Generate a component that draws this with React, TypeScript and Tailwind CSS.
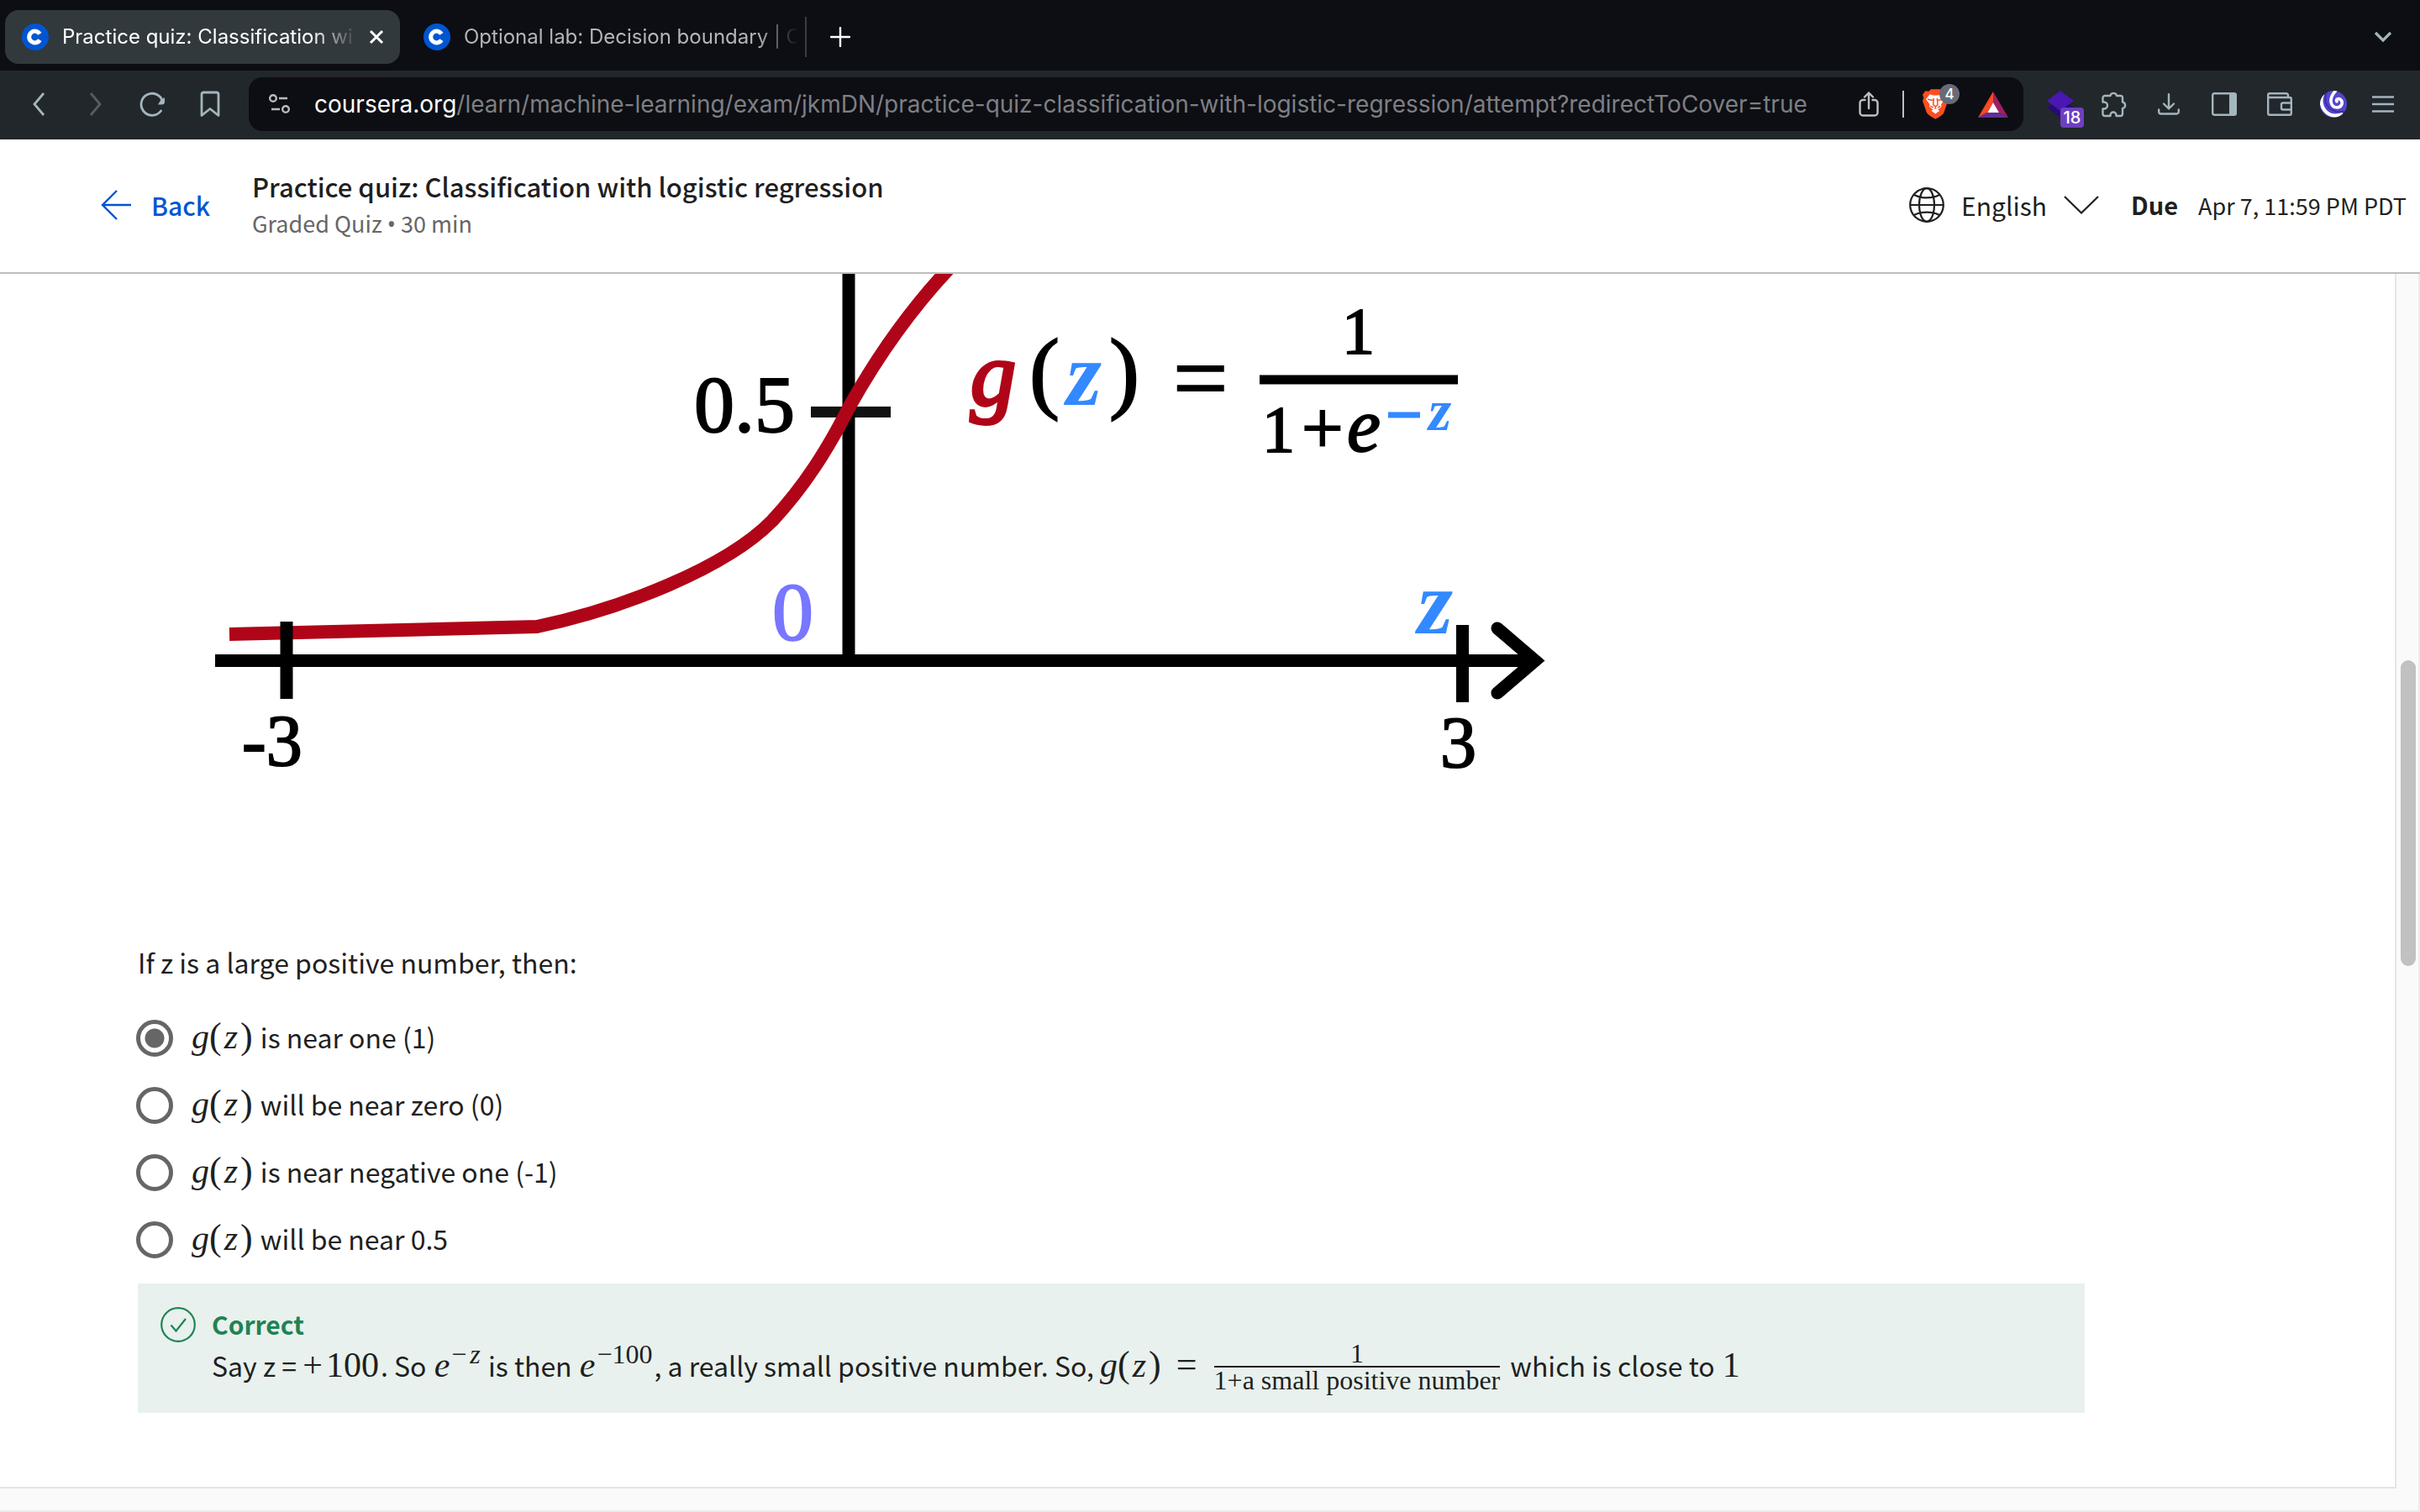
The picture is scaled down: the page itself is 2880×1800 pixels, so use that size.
import React from "react";

const ICON = "#a3b5bd";

function CourseraFavicon() {
  return (
    <svg viewBox="0 0 32 32" className="h-8 w-8 shrink-0" aria-hidden="true">
      <circle cx="16" cy="16" r="16" fill="#0056d2" />
      <path d="M21.4 12.3A6.9 6.9 0 1 0 21.4 19.7" fill="none" stroke="#fff" strokeWidth="5" />
    </svg>
  );
}

function TabStrip() {
  return (
    <div className="flex h-[84px] items-center bg-[#0d0e13] pt-1 pl-1.5 font-['Inter',sans-serif] text-[24px] leading-8">
      <div className="flex h-16 w-[470px] items-center rounded-2xl bg-[#32393d] pr-1.5 pl-5 text-white">
        <CourseraFavicon />
        <span className="ml-4 min-w-0 flex-1 whitespace-nowrap [mask-image:linear-gradient(to_right,#000_84%,transparent_100%)]">
          Practice quiz: Classification wi
        </span>
        <button aria-label="Close tab" className="flex h-10 w-[44px] items-center justify-center">
          <svg viewBox="0 0 18 18" className="h-[18px] w-[18px]" aria-hidden="true">
            <path d="M2 2l14 14M16 2L2 16" stroke="#fff" strokeWidth="3" />
          </svg>
        </button>
      </div>
      <div className="flex h-16 w-[482px] items-center pr-2 pl-7 text-[#b4b5b8]">
        <CourseraFavicon />
        <span className="ml-4 min-w-0 flex-1 whitespace-nowrap [mask-image:linear-gradient(to_right,#000_88%,transparent_100%)]">
          Optional lab: Decision boundary | C
        </span>
      </div>
      <div className="h-12 w-0.5 bg-[#3a3c40]" />
      <button aria-label="New tab" className="flex h-16 w-20 items-center justify-center">
        <svg viewBox="0 0 24 24" className="h-6 w-6" aria-hidden="true">
          <path d="M12 1v22M1 12h22" stroke="#fff" strokeWidth="2.4" strokeLinecap="round" />
        </svg>
      </button>
      <button aria-label="Search tabs" className="mr-3 ml-auto flex h-16 w-16 items-center justify-center">
        <svg viewBox="0 0 22 14" className="h-[14px] w-[22px]" aria-hidden="true">
          <path d="M2 2l9 9 9-9" fill="none" stroke={ICON} strokeWidth="3.2" />
        </svg>
      </button>
    </div>
  );
}

function BraveShield() {
  return (
    <span className="relative h-9 w-[30px]">
      <svg viewBox="0 0 90 107" className="h-9 w-[30px]" aria-hidden="true">
        <path
          d="M22 8L30 0H62L70 8 80 6 90 20 87 30 90 42 76 84Q74 90 62 98L46 107 30 98Q18 90 15 84L0 42 4 30 0 20 10 6Z"
          fill="#fb4f20"
        />
        <path d="M26 18L38 22H54L66 18 80 36 66 54 68 62 54 74 46 68 38 74 24 62 26 54 12 36Z" fill="#fff" />
        <path d="M31 77L46 69 61 77 46 88Z" fill="#fff" />
        <path
          d="M18 36L38 40M74 36L54 40M40 32L38 56 46 62 54 56 52 32M46 62V70M28 60L38 66M64 60L54 66"
          fill="none"
          stroke="#fb4f20"
          strokeWidth="4.5"
        />
      </svg>
      <span className="absolute -top-1.5 left-5 flex h-6 w-6 items-center justify-center rounded-full bg-[#686a78] text-[17px] leading-5 font-medium text-white">
        4
      </span>
    </span>
  );
}

function Toolbar() {
  return (
    <div className="flex h-[82px] items-center bg-[#22272b] pr-4 pb-0.5 pl-3 font-['Inter',sans-serif]">
      <button aria-label="Go back" className="flex h-16 w-[68px] items-center justify-center">
        <svg viewBox="0 0 16 30" className="h-[30px] w-4" aria-hidden="true">
          <path d="M14 2L3 15l11 13" fill="none" stroke={ICON} strokeWidth="2.8" />
        </svg>
      </button>
      <button aria-label="Go forward" className="flex h-16 w-[68px] items-center justify-center">
        <svg viewBox="0 0 16 30" className="h-[30px] w-4" aria-hidden="true">
          <path d="M2 2l11 13L2 28" fill="none" stroke="#565d62" strokeWidth="2.8" />
        </svg>
      </button>
      <button aria-label="Reload" className="flex h-16 w-[68px] items-center justify-center">
        <svg viewBox="0 0 32 32" className="h-8 w-8" aria-hidden="true">
          <path d="M27.6 13A13 13 0 1 0 25.5 24" fill="none" stroke={ICON} strokeWidth="2.8" strokeLinecap="round" />
          <path d="M30 8v5a3.5 3.5 0 0 1-3.5 3.5H22l3-5z" fill={ICON} />
        </svg>
      </button>
      <button aria-label="Bookmark" className="flex h-16 w-[68px] items-center justify-center">
        <svg viewBox="0 0 24 32" className="h-8 w-6" aria-hidden="true">
          <path
            d="M2 4.5A2.5 2.5 0 0 1 4.5 2h15A2.5 2.5 0 0 1 22 4.5V29.5l-10-8-10 8z"
            fill="none"
            stroke={ICON}
            strokeWidth="2.8"
            strokeLinejoin="round"
          />
        </svg>
      </button>
      <div className="ml-3 flex h-16 min-w-0 flex-1 items-center rounded-2xl bg-[#0d0e13] pr-[18px] pl-6">
        <svg viewBox="0 0 26 26" className="h-[26px] w-[26px] shrink-0" fill="none" stroke="#b9bbbf" strokeWidth="2.4" aria-hidden="true">
          <circle cx="5" cy="6" r="3.8" />
          <path d="M12 6h10M3 19h10" />
          <circle cx="20" cy="19" r="3.8" />
        </svg>
        <button className="ml-7 min-w-0 flex-1 overflow-hidden text-left text-[28px] leading-9 whitespace-nowrap text-[#7e7f83]">
          <span className="text-white">coursera.org</span>
          /learn/machine-learning/exam/jkmDN/practice-quiz-classification-with-logistic-regression/attempt?redirectToCover=true
        </button>
        <button aria-label="Share" className="mr-7">
          <svg viewBox="0 0 24 30" className="h-[30px] w-6" fill="none" stroke="#bfc0c2" strokeWidth="2.4" strokeLinecap="round" strokeLinejoin="round" aria-hidden="true">
            <path d="M7.5 10H5a3.5 3.5 0 0 0-3.5 3.5v11.5a3.5 3.5 0 0 0 3.5 3.5h14a3.5 3.5 0 0 0 3.5-3.5V13.5A3.5 3.5 0 0 0 19 10h-2.5" />
            <path d="M12 20V1.5M7 6.5l5-5 5 5" />
          </svg>
        </button>
        <div className="h-8 w-0.5 bg-[#bfc0c2]" />
        <button aria-label="Brave Shields, 4 blocked" className="ml-[22px] flex">
          <BraveShield />
        </button>
        <button aria-label="Brave Rewards" className="ml-9">
          <svg viewBox="0 0 108 93" className="h-[31px] w-9" aria-hidden="true">
            <path d="M54 0L0 93 34 74 54 39Z" fill="#ff4724" />
            <path d="M54 0L108 93 74 74 54 39Z" fill="#9e1f63" />
            <path d="M0 93H108L74 74H34Z" fill="#662d91" />
            <path d="M54 39L34 75H75Z" fill="#fff" />
          </svg>
        </button>
      </div>
      <button aria-label="Extension, 18" className="relative ml-3 flex h-16 w-16 items-center justify-center">
        <svg viewBox="0 0 32 32" className="h-8 w-8" aria-hidden="true">
          <path d="M0 20l16-11 16 11-16 12z" fill="#260b78" />
          <path d="M16 0l16 12-16 12L0 12z" fill="#4a17b0" />
        </svg>
        <span className="absolute top-9 left-8 flex h-6 w-7 items-center justify-center rounded bg-[#6d3fc0] text-[20px] leading-6 font-medium text-white">
          18
        </span>
      </button>
      <button aria-label="Extensions" className="flex h-16 w-16 items-center justify-center">
        <svg viewBox="0 0 30 32" className="h-8 w-[30px]" aria-hidden="true">
          <path
            d="M1.5 8.5a2.5 2.5 0 0 1 2.5-2.5h6.5V5.5a4 4 0 0 1 7.5 0V6h4.5A2.5 2.5 0 0 1 25 8.5V13.5h.5a4 4 0 0 1 0 7.5H25v6.5a2.5 2.5 0 0 1-2.5 2.5H17.5v-1a3.5 3.5 0 0 0-7 0v1H4a2.5 2.5 0 0 1-2.5-2.5V21.5H3a4 4 0 0 0 0-8H1.5z"
            fill="none"
            stroke={ICON}
            strokeWidth="2.4"
            strokeLinejoin="round"
          />
        </svg>
      </button>
      <button aria-label="Downloads" className="flex h-16 w-[66px] items-center justify-center">
        <svg viewBox="0 0 26 26" className="h-[26px] w-[26px]" fill="none" stroke={ICON} strokeWidth="2.4" strokeLinecap="round" strokeLinejoin="round" aria-hidden="true">
          <path d="M13 1.2V18M7 12.5l6 6 6-6M1.2 19.5V22a2.5 2.5 0 0 0 2.5 2.5h18.6a2.5 2.5 0 0 0 2.5-2.5v-2.5" />
        </svg>
      </button>
      <button aria-label="Sidebar" className="flex h-16 w-[66px] items-center justify-center">
        <svg viewBox="0 0 30 28" className="h-7 w-[30px]" aria-hidden="true">
          <rect x="1.2" y="1.2" width="27.6" height="25.6" rx="2" fill="none" stroke={ICON} strokeWidth="2.4" />
          <path d="M21 1h7a1.5 1.5 0 0 1 1.5 1.5v23A1.5 1.5 0 0 1 28 27h-7z" fill={ICON} />
        </svg>
      </button>
      <button aria-label="Wallet" className="flex h-16 w-[66px] items-center justify-center">
        <svg viewBox="0 0 30 28" className="h-7 w-[30px]" fill="none" stroke={ICON} strokeWidth="2.4" strokeLinejoin="round" aria-hidden="true">
          <path d="M1.2 6.5V3A1.8 1.8 0 0 1 3 1.2h19.5A2.5 2.5 0 0 1 25 3.7v2.8" />
          <path d="M1.2 6h25.6A2 2 0 0 1 28.8 8v17a1.8 1.8 0 0 1-1.8 1.8H3A1.8 1.8 0 0 1 1.2 25z" />
          <path d="M28.8 12.5H19a2 2 0 0 0-2 2v4a2 2 0 0 0 2 2h9.8" />
        </svg>
      </button>
      <button aria-label="Profile" className="flex h-16 w-[62px] items-center justify-center">
        <svg viewBox="0 0 96 96" className="h-8 w-8" aria-hidden="true">
          <defs>
            <clipPath id="avatar-disc">
              <circle cx="48" cy="48" r="48" />
            </clipPath>
          </defs>
          <g clipPath="url(#avatar-disc)">
            <rect width="96" height="96" fill="#5446cc" />
            <path d="M60 38C56 32 64 26 71 30 84 38 80 58 62 60 38 60 28 30 56 0" fill="none" stroke="#fff" strokeWidth="11" strokeLinecap="round" />
            <path d="M26 2C10 26 16 84 92 74" fill="none" stroke="#3f2fa8" strokeWidth="6" />
            <path d="M10 12C-8 50 20 104 82 84" fill="none" stroke="#fff" strokeWidth="12" />
          </g>
        </svg>
      </button>
      <button aria-label="Menu" className="flex h-16 w-14 items-center justify-center">
        <svg viewBox="0 0 26 20" className="h-5 w-[26px]" aria-hidden="true">
          <path d="M0 1.5h26M0 10h26M0 18.5h26" stroke={ICON} strokeWidth="2.4" />
        </svg>
      </button>
    </div>
  );
}

function QuizHeader() {
  return (
    <header className="flex h-40 items-center border-b-2 border-[#bdbdbd] bg-white pr-4 pb-0.5 pl-[120px] text-[#1f1f1f]">
      <a href="#back" className="flex w-[180px] items-center text-[30px] leading-10 font-medium text-[#0056d2]">
        <svg viewBox="0 0 36 36" className="mr-6 h-9 w-9" fill="none" stroke="#0056d2" strokeWidth="2.4" aria-hidden="true">
          <path d="M36 18H2M19 1L2 18l17 17" />
        </svg>
        Back
      </a>
      <div>
        <h1 className="text-[31px] leading-[44px] font-medium">Practice quiz: Classification with logistic regression</h1>
        <p className="text-[27px] leading-[44px] text-[#666]">
          Graded Quiz <span className="font-['Noto_Sans',sans-serif]">•</span> 30 min
        </p>
      </div>
      <div className="ml-auto flex items-center">
        <svg viewBox="0 0 42 42" className="mr-5 h-[42px] w-[42px]" fill="none" stroke="#1f1f1f" strokeWidth="2.2" aria-hidden="true">
          <circle cx="21" cy="21" r="19.8" />
          <ellipse cx="21" cy="21" rx="9" ry="19.8" />
          <path d="M1 21h40M6 9c8 4.5 22 4.5 30 0M6 33c8-4.5 22-4.5 30 0" />
        </svg>
        <div className="flex items-center">
          <label htmlFor="language" className="sr-only">
            Language
          </label>
          <select id="language" className="h-14 appearance-none bg-transparent pr-1 text-[30px] leading-[48px]">
            <option>English</option>
          </select>
          <svg viewBox="0 0 42 24" className="ml-4 h-6 w-[42px]" fill="none" stroke="#1f1f1f" strokeWidth="2.2" aria-hidden="true">
            <path d="M1 2l20 19.5L41 2" />
          </svg>
        </div>
        <p className="ml-[38px] text-[27px] leading-10">
          <strong className="mr-6 text-[29px] font-bold">Due</strong>
          Apr 7, 11:59 PM PDT
        </p>
      </div>
    </header>
  );
}

function SigmoidChart() {
  return (
    <svg
      viewBox="240 326 1620 624"
      className="ml-[76px] h-[624px] w-[1620px] shrink-0 font-['Liberation_Serif',serif]"
      role="img"
      aria-label="Sigmoid function g(z) plotted from z = -3 to z = 3"
    >
      <path d="M965 490.5H1060" stroke="#111" strokeWidth="13" />
      <path d="M1010 300V786" stroke="#000" strokeWidth="15" />
      <path
        d="M273 755L639 746C740 725 864 676 919 620 958 578 985 535 1012 482 1044 425 1084 368 1130 319"
        fill="none"
        stroke="#b00518"
        strokeWidth="16"
      />
      <path d="M256 786.5H1826" stroke="#000" strokeWidth="15" />
      <path d="M1782 748L1827 786.5 1782 825" fill="none" stroke="#000" strokeWidth="15" strokeLinecap="round" strokeMiterlimit="8" />
      <path d="M341 740V832M1740.5 744V836" stroke="#000" strokeWidth="15" />
      <g fill="#000" stroke="#000" strokeWidth="2">
        <text x="826" y="514" fontSize="96">0.5</text>
        <text x="288" y="911" fontSize="86">-3</text>
        <text x="1714" y="913" fontSize="86">3</text>
        <text x="1225" y="478" fontSize="108">(</text>
        <text x="1320" y="478" fontSize="108">)</text>
        <text x="1396" y="489" fontSize="116">=</text>
        <text x="1597" y="420" fontSize="78">1</text>
        <text x="1502" y="537" fontSize="78">1</text>
        <text x="1549" y="539" fontSize="88">+</text>
        <text x="1603" y="537" fontSize="90" fontStyle="italic">e</text>
      </g>
      <text x="919" y="761" fontSize="98" fill="#7777ff" stroke="#7777ff" strokeWidth="2">0</text>
      <text x="1155" y="482" fontSize="108" fontStyle="italic" fill="#b00518" stroke="#b00518" strokeWidth="4">g</text>
      <g fill="#3389ff" fontStyle="italic" fontWeight="bold">
        <text x="1269" y="482" fontSize="108">z</text>
        <text x="1687" y="754" fontSize="108">z</text>
        <text x="1700" y="512" fontSize="70">z</text>
      </g>
      <path d="M1499 452H1735" stroke="#000" strokeWidth="11" />
      <path d="M1652 494H1690" stroke="#3389ff" strokeWidth="7" />
    </svg>
  );
}

function MathRun({ children, className = "" }: { children: React.ReactNode; className?: string }) {
  return <span className={`mr-0.5 font-['Liberation_Serif',serif] text-[42px] leading-10 ${className}`}>{children}</span>;
}

function GofZ() {
  return (
    <MathRun>
      <i>g</i>
      <span className="text-[44px]">(</span>
      <i className="px-[3px]">z</i>
      <span className="text-[44px]">)</span>
    </MathRun>
  );
}

const OPTIONS = ["is near one (1)", "will be near zero (0)", "is near negative one (-1)", "will be near 0.5"];

function Question() {
  return (
    <fieldset className="mt-[175px] text-[32px] leading-10">
      <legend className="mb-[31px]">If z is a large positive number, then:</legend>
      {OPTIONS.map((option, i) => (
        <label key={option} className="flex h-20 items-center">
          <input
            type="radio"
            name="answer"
            defaultChecked={i === 0}
            className="-ml-0.5 h-11 w-11 shrink-0 appearance-none rounded-full border-[5px] border-[#666] checked:bg-[radial-gradient(circle,#666_11px,transparent_12px)]"
          />
          <span className="ml-[22px] pb-1">
            <GofZ /> {option}
          </span>
        </label>
      ))}
    </fieldset>
  );
}

function Feedback() {
  return (
    <section className="mt-3 flex h-[154px] bg-[#e8f1ed] pt-7 pl-[27px]">
      <svg viewBox="0 0 42 42" className="h-[42px] w-[42px] shrink-0" fill="none" stroke="#1f8354" strokeWidth="2.2" aria-hidden="true">
        <circle cx="21" cy="21" r="19.8" />
        <path d="M12.5 21.5l6 7L30 14" />
      </svg>
      <div className="ml-[19px]">
        <h2 className="text-[30px] leading-10 font-bold text-[#1f8354]">Correct</h2>
        <p className="text-[32px] leading-[56px] whitespace-nowrap">
          Say z ={" "}
          <MathRun>
            <span className="mr-1">+</span>100
          </MathRun>
          . So{" "}
          <MathRun className="ml-0.5">
            <i>e</i>
            <sup className="ml-0.5 text-[32px]">
              −<i className="pl-1">z</i>
            </sup>
          </MathRun>{" "}
          is then{" "}
          <MathRun className="ml-0.5">
            <i>e</i>
            <sup className="ml-0.5 text-[32px]">−100</sup>
          </MathRun>
          , a really small positive number. So,{" "}
          <GofZ />
          <MathRun className="mr-5 ml-4 text-[44px]">=</MathRun>
          <span className="mr-3 inline-flex flex-col pb-1.5 text-center align-middle font-['Liberation_Serif',serif] text-[32px] leading-[30px]">
            <span className="border-b-2 border-[#1f1f1f]">1</span>
            <span>1+a small positive number</span>
          </span>
          which is close to <MathRun className="ml-0.5">1</MathRun>
        </p>
      </div>
    </section>
  );
}

export default function App() {
  return (
    <div className="flex min-h-screen flex-col bg-[#fafafa] font-['Noto_Sans_CJK_SC',sans-serif] text-[#1f1f1f]">
      <TabStrip />
      <Toolbar />
      <QuizHeader />
      <div className="flex flex-1 border-b-2 border-[#ebebeb]">
        <main className="mb-[26px] min-w-0 flex-1 border-r-2 border-b-2 border-[#e5e5e5] bg-white pr-[369px] pl-[164px]">
          <SigmoidChart />
          <Question />
          <Feedback />
        </main>
        <div className="w-7 border-r-2 border-[#ebebeb] pt-[460px] pl-[5px]">
          <div className="h-[364px] w-[18px] rounded-full bg-[#c1c1c1]" />
        </div>
      </div>
    </div>
  );
}
